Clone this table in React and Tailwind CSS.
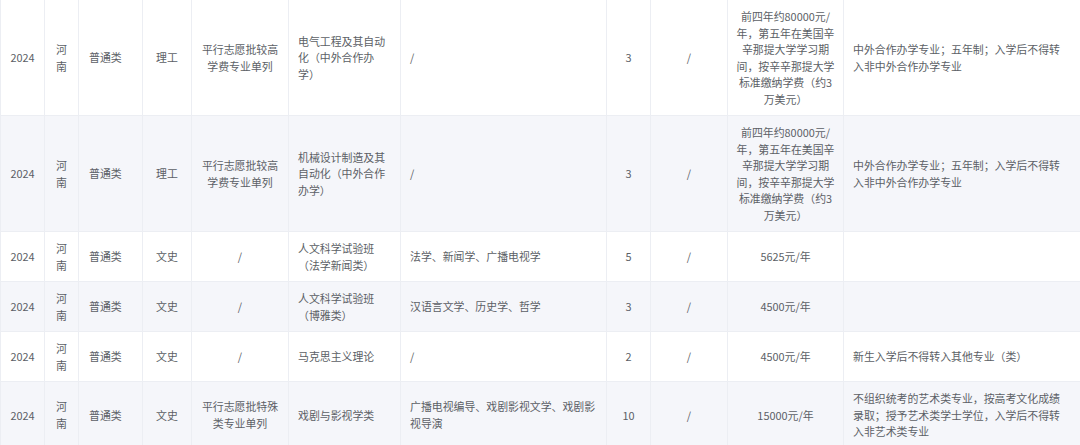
const cols = [
  { w: "w-[44px]", cell: "text-center px-[6px] whitespace-nowrap" },
  { w: "w-[34px]", cell: "text-center px-[9px]" },
  { w: "w-[64px]", cell: "text-left px-[10px]" },
  { w: "w-[49px]", cell: "text-center px-[9px]" },
  { w: "w-[97px]", cell: "text-center px-[9px]" },
  { w: "w-[112px]", cell: "text-left px-[9px]" },
  { w: "w-[206px]", cell: "text-left px-[9px]" },
  { w: "w-[44px]", cell: "text-center px-[8px] whitespace-nowrap" },
  { w: "w-[77px]", cell: "text-center px-[8px]" },
  { w: "w-[116px]", cell: "text-center px-[8px]" },
  { w: "w-[237px]", cell: "text-left pl-[9px] pr-[15px]" },
]

const rows = [
  ["2024", "河南", "普通类", "理工", "平行志愿批较高学费专业单列", "电气工程及其自动化（中外合作办学）", "/", "3", "/", "前四年约80000元/年，第五年在美国辛辛那提大学学习期间，按辛辛那提大学标准缴纳学费（约3万美元）", "中外合作办学专业；五年制；入学后不得转入非中外合作办学专业"],
  ["2024", "河南", "普通类", "理工", "平行志愿批较高学费专业单列", "机械设计制造及其自动化（中外合作办学）", "/", "3", "/", "前四年约80000元/年，第五年在美国辛辛那提大学学习期间，按辛辛那提大学标准缴纳学费（约3万美元）", "中外合作办学专业；五年制；入学后不得转入非中外合作办学专业"],
  ["2024", "河南", "普通类", "文史", "/", "人文科学试验班（法学新闻类）", "法学、新闻学、广播电视学", "5", "/", "5625元/年", ""],
  ["2024", "河南", "普通类", "文史", "/", "人文科学试验班（博雅类）", "汉语言文学、历史学、哲学", "3", "/", "4500元/年", ""],
  ["2024", "河南", "普通类", "文史", "/", "马克思主义理论", "/", "2", "/", "4500元/年", "新生入学后不得转入其他专业（类）"],
  ["2024", "河南", "普通类", "文史", "平行志愿批特殊类专业单列", "戏剧与影视学类", "广播电视编导、戏剧影视文学、戏剧影视导演", "10", "/", "15000元/年", "不组织统考的艺术类专业，按高考文化成绩录取；授予艺术类学士学位，入学后不得转入非艺术类专业"],
]

const App = () => {
  return (
    <div className="w-[1080px] h-[445px] overflow-hidden bg-white">
      <table className="w-[1080px] table-fixed border-collapse font-['Noto_Sans_CJK_SC','Noto_Sans',sans-serif] text-[10.9px] leading-[16.5px] text-[#5c5f66] [text-spacing-trim:space-all]">
        <colgroup>
          {cols.map((c, i) => <col key={i} className={c.w} />)}
        </colgroup>
        <tbody>
          {rows.map((r, ri) => (
            <tr key={ri} className={ri % 2 === 1 ? "bg-[#f5f6fa]" : "bg-white"}>
              {r.map((v, ci) => (
                <td
                  key={ci}
                  className={`border border-[#eceef3] py-2 align-middle break-words ${ri === 0 ? "border-t-0" : ""} ${cols[ci].cell}`}
                >
                  {v}
                </td>
              ))}
            </tr>
          ))}
        </tbody>
      </table>
    </div>
  )
}

export default App
